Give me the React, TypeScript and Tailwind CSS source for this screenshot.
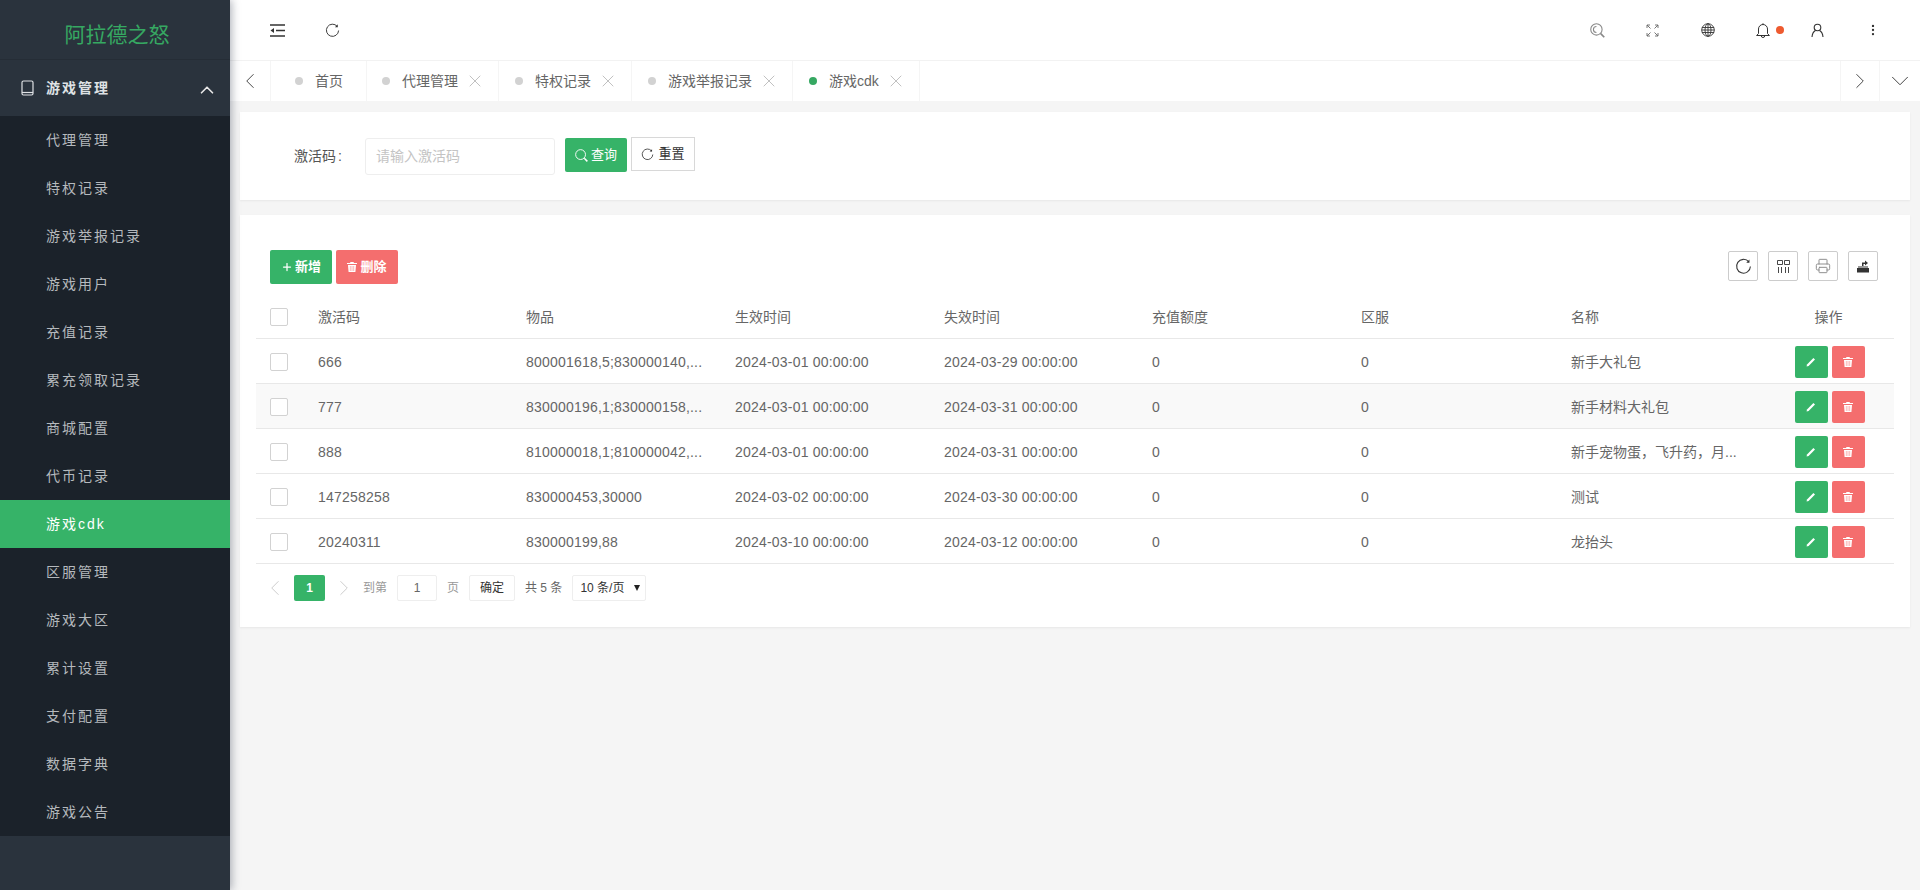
import { ChevronDown, ChevronLeft, ChevronRight, ChevronUp, MoreVertical, Plus, Printer, X } from "lucide-react";

const menus = ["代理管理", "特权记录", "游戏举报记录", "游戏用户", "充值记录", "累充领取记录", "商城配置", "代币记录", "游戏cdk", "区服管理", "游戏大区", "累计设置", "支付配置", "数据字典", "游戏公告"];

const tabs = [
  { name: "首页", cls: "w-[96px] pl-6" },
  { name: "代理管理", cls: "w-[132px] pl-[15px]" },
  { name: "特权记录", cls: "w-[133px] pl-4" },
  { name: "游戏举报记录", cls: "w-[161px] pl-4" },
  { name: "游戏cdk", cls: "w-[127px] pl-4", active: true },
];

const rows = [
  ["666", "800001618,5;830000140,...", "2024-03-01 00:00:00", "2024-03-29 00:00:00", "0", "0", "新手大礼包"],
  ["777", "830000196,1;830000158,...", "2024-03-01 00:00:00", "2024-03-31 00:00:00", "0", "0", "新手材料大礼包"],
  ["888", "810000018,1;810000042,...", "2024-03-01 00:00:00", "2024-03-31 00:00:00", "0", "0", "新手宠物蛋，飞升药，月..."],
  ["147258258", "830000453,30000", "2024-03-02 00:00:00", "2024-03-30 00:00:00", "0", "0", "测试"],
  ["20240311", "830000199,88", "2024-03-10 00:00:00", "2024-03-12 00:00:00", "0", "0", "龙抬头"],
];

const head = ["激活码", "物品", "生效时间", "失效时间", "充值额度", "区服", "名称"];

const gridCols = "grid grid-cols-[62px_208px_209px_209px_208px_209px_210px_192px_1fr] items-center pt-[2px]";

const Reload = ({ size = 16 }: { size?: number }) => (
  <svg width={size} height={size} viewBox="0 0 16 16" fill="none" stroke="currentColor" strokeWidth="1">
    <path d="M13 3.600A6.500 6.500 0 1 0 14.500 8" />
    <path d="M13.600 1.400v3h-3" fill="currentColor" stroke="none" />
  </svg>
);

const Magnifier = ({ size = 14, inner = false }: { size?: number; inner?: boolean }) => (
  <svg width={size} height={size} viewBox="0 0 14 14" fill="none" stroke="currentColor" strokeWidth="1">
    <circle cx="6" cy="6" r="5.300" />
    {inner && <path d="M6 3.200a2.800 2.800 0 0 0 0 5.600" />}
    <path d="M10 10l3.300 3.300" strokeWidth="1.600" />
  </svg>
);

const Trash = ({ size = 10 }: { size?: number }) => (
  <svg width={size} height={size} viewBox="0 0 10 10" fill="currentColor">
    <path d="M3.500 0h3l.5 1h3v1H0V1h3zM1 3h8l-.6 7H1.600z" />
    <path d="M3.300 4v5M5 4v5M6.700 4v5" stroke="#f46e6e" strokeWidth=".5" />
  </svg>
);

const Pen = () => (
  <svg width="10" height="10" viewBox="0 0 10 10" fill="currentColor">
    <path d="M7.400 1 9 2.600 2.600 9 .6 9.400 1 7.400z" />
  </svg>
);

const Checkbox = () => <span className="block h-[18px] w-[18px] rounded-[2px] border border-[#d2d2d2] bg-white" />;

const App = () => {
  return (
    <div className="flex h-screen w-full overflow-hidden bg-[#f5f5f5] font-['Liberation_Sans','Noto_Sans_CJK_SC',sans-serif] text-sm text-[#666]">
      {/* sidebar */}
      <div className="relative z-10 flex w-[230px] shrink-0 flex-col bg-[#2a333d] shadow-[2px_0_8px_rgba(40,50,70,0.35)]">
        <div className="flex h-[60px] items-center justify-center border-b border-[#252d36] pl-1 pt-[10px] text-[21px] text-[#36a862]">阿拉德之怒</div>
        <div className="flex h-[56px] items-center pl-[21px] pr-3 font-bold tracking-[2px] text-[#dfe2e5]">
          <svg width="13" height="16" viewBox="0 0 13 16" fill="none" stroke="currentColor" strokeWidth="1.200">
            <rect x="1" y="1" width="11" height="14" rx="1.500" />
            <path d="M1 12.500h11" />
          </svg>
          <span className="ml-3 flex-1">游戏管理</span>
          <ChevronUp size={22} strokeWidth={1.800} className="mt-1 text-[#e8e8e8]" />
        </div>
        <div className="bg-[#1b222a]">
          {menus.map((m) => (
            <div key={m} className={`flex h-12 items-center pl-[46px] tracking-[2px] ${m === "游戏cdk" ? "bg-[#36b368] text-white" : "text-[#b5b9bd]"}`}>
              {m}
            </div>
          ))}
        </div>
      </div>

      {/* main */}
      <div className="flex min-w-0 flex-1 flex-col">
        <div className="flex h-[60px] shrink-0 items-center justify-between bg-white px-5 text-[#333]">
          <div className="flex items-center">
            <span className="flex w-[55px] justify-center">
              <svg width="15" height="13" viewBox="0 0 15 13" fill="none" stroke="currentColor" strokeWidth="1.500">
                <path d="M0 1h15M6 6.500h9M0 12h15" />
                <path d="M4 4v5L.5 6.500z" fill="currentColor" stroke="none" />
              </svg>
            </span>
            <span className="flex w-[55px] justify-center">
              <Reload size={15} />
            </span>
          </div>
          <div className="flex items-center">
            <span className="flex w-[55px] justify-center text-[#888]">
              <Magnifier size={15} inner />
            </span>
            <span className="flex w-[55px] justify-center text-[#666]">
              <svg width="13" height="13" viewBox="0 0 13 13" fill="none" stroke="currentColor" strokeWidth=".9">
                <path d="M1 1l3.500 3.500M1 1v3M1 1h3M12 1 8.500 4.500M12 1v3M12 1H9M1 12l3.500-3.500M1 12V9M1 12h3M12 12 8.500 8.500M12 12V9M12 12H9" />
              </svg>
            </span>
            <span className="flex w-[55px] justify-center text-[#333]">
              <svg width="14" height="14" viewBox="0 0 14 14" fill="none" stroke="currentColor" strokeWidth=".9">
                <circle cx="7" cy="7" r="6.300" />
                <ellipse cx="7" cy="7" rx="3" ry="6.300" />
                <path d="M7 .7v12.600M1 4.500h12M.7 7h12.600M1 9.500h12" />
              </svg>
            </span>
            <span className="relative flex w-[55px] justify-center text-[#333]">
              <svg width="14" height="15" viewBox="0 0 14 15" fill="none" stroke="currentColor" strokeWidth="1">
                <path d="M7 1.500a4.500 4.500 0 0 0-4.500 4.500v4.500L.6 12.500h12.800l-1.900-2V6A4.500 4.500 0 0 0 7 1.500zM7 .3v1.200M5.300 12.800a1.700 1.700 0 0 0 3.400 0" />
              </svg>
              <span className="absolute left-[41px] top-[3px] h-2 w-2 rounded-full bg-[#ee5a2f]" />
            </span>
            <span className="flex w-[55px] justify-center text-[#333]">
              <svg width="13" height="15" viewBox="0 0 13 15" fill="none" stroke="currentColor" strokeWidth="1.100">
                <circle cx="6.500" cy="4.500" r="3.300" />
                <path d="M4.500 7.500C2.500 8.500 1.300 10.500 1 14M8.500 7.500c2 1 3.200 3 3.500 6.500" />
              </svg>
            </span>
            <span className="flex w-[55px] justify-center text-[#333]">
              <MoreVertical size={14} />
            </span>
          </div>
        </div>

        {/* tabs */}
        <div className="flex h-[41px] shrink-0 items-stretch border-t border-[#f2f2f2] bg-white">
          <div className="flex w-[41px] items-center justify-center border-r border-[#f5f5f5] text-[#444]">
            <ChevronLeft size={26} strokeWidth={0.900} />
          </div>
          {tabs.map((t) => (
            <div key={t.name} className={`flex items-center border-r border-[#f5f5f5] ${t.cls}`}>
              <span className={`h-2 w-2 shrink-0 rounded-full ${t.active ? "bg-[#36a862]" : "bg-[#d2d2d2]"}`} />
              <span className="ml-3">{t.name}</span>
              {t.name !== "首页" && <X size={20} strokeWidth={1.100} className="ml-[7px] text-[#bbb]" />}
            </div>
          ))}
          <div className="flex-1" />
          <div className="flex w-10 items-center justify-center border-x border-[#f5f5f5] text-[#444]">
            <ChevronRight size={26} strokeWidth={0.900} />
          </div>
          <div className="flex w-10 items-center justify-center text-[#444]">
            <ChevronDown size={30} strokeWidth={0.800} />
          </div>
        </div>

        {/* content */}
        <div className="flex flex-1 flex-col gap-[15px] px-2.5 pt-[11px]">
          <div className="flex h-[88px] items-center bg-white pl-[54px] shadow-[0_1px_2px_rgba(0,0,0,0.06)]">
            <span className="w-[71px] text-[#555]">
              激活码<span className="ml-[2px]">:</span>
            </span>
            <input placeholder="请输入激活码" className="h-[37px] w-[190px] rounded-[3px] border border-[#eee] pl-[10px] text-sm outline-none placeholder:text-[#c4c4c4]" />
            <button className="-mt-[2px] ml-2.5 flex h-[34px] w-[62px] items-center justify-center gap-[3px] rounded-[2px] bg-[#36b368] text-[13px] text-white">
              <Magnifier size={13} />
              查询
            </button>
            <button className="-mt-1 ml-1 flex h-[34px] w-[64px] items-center justify-center gap-1 border border-[#d8d8d8] text-[13px] text-[#333]">
              <Reload size={13} />
              重置
            </button>
          </div>

          <div className="h-[412px] bg-white px-4 pt-[35px] shadow-[0_1px_2px_rgba(0,0,0,0.06)]">
            <div className="flex items-start justify-between pl-[14px] pr-4">
              <div className="flex gap-1">
                <button className="flex h-[34px] w-[62px] items-center justify-center gap-0.5 rounded-[2px] bg-[#36b368] text-[13px] font-bold text-white">
                  <Plus size={12} strokeWidth={2.500} />
                  新增
                </button>
                <button className="flex h-[34px] w-[62px] items-center justify-center gap-[3px] rounded-[2px] bg-[#f46e6e] text-[13px] font-bold text-white">
                  <Trash />
                  删除
                </button>
              </div>
              <div className="mt-px flex gap-2.5 text-[#333]">
                <button className="flex h-[30px] w-[30px] items-center justify-center rounded-[2px] border border-[#ccc]">
                  <Reload size={17} />
                </button>
                <button className="flex h-[30px] w-[30px] items-center justify-center rounded-[2px] border border-[#ccc]">
                  <svg width="13" height="13" viewBox="0 0 13 13" fill="none" stroke="currentColor" strokeWidth=".9">
                    <path d="M.5.500h5v4h-5zM7.500.500h5v4h-5zM1.500 7v6M4.500 7v6M8.500 7v6M11.500 7v6" />
                  </svg>
                </button>
                <button className="flex h-[30px] w-[30px] items-center justify-center rounded-[2px] border border-[#ccc] text-[#888]">
                  <Printer size={16} strokeWidth={1.400} />
                </button>
                <button className="flex h-[30px] w-[30px] items-center justify-center rounded-[2px] border border-[#ccc]">
                  <svg width="14" height="14" viewBox="0 0 14 14" fill="currentColor">
                    <path d="M1 9h12v4.500H1zM2 7.500h10V8.500H2zM6 7V3.500h3V1.500L12 4 9 6.500V5H7.500v2z" />
                  </svg>
                </button>
              </div>
            </div>

            <div className={`mt-2.5 h-[45px] border-b border-[#e8e8e8] ${gridCols}`}>
              <span className="pl-[14px]"><Checkbox /></span>
              {head.map((h) => (
                <span key={h}>{h}</span>
              ))}
              <span className="text-center">操作</span>
            </div>
            {rows.map((r, i) => (
              <div key={r[0]} className={`h-[45px] border-b border-[#e8e8e8] ${gridCols} ${i === 1 ? "bg-[#f9f9f9]" : ""}`}>
                <span className="pl-[14px]"><Checkbox /></span>
                {r.map((c, j) => (
                  <span key={j} className={j < 6 ? "tracking-[0.2px]" : ""}>{c}</span>
                ))}
                <span className="flex justify-center gap-1 pl-[2px]">
                  <button className="flex h-8 w-[33px] items-center justify-center rounded-[2px] bg-[#36b368] text-white"><Pen /></button>
                  <button className="flex h-8 w-[33px] items-center justify-center rounded-[2px] bg-[#f46e6e] text-white"><Trash /></button>
                </span>
              </div>
            ))}

            <div className="mt-[11px] flex h-[26px] items-center pl-[14px] text-xs text-[#999]">
              <span className="flex w-[24px] text-[#ccc]"><ChevronLeft size={26} strokeWidth={0.900} className="-ml-2 shrink-0" /></span>
              <span className="flex h-[26px] w-[31px] items-center justify-center rounded-[2px] bg-[#36b368] font-bold text-white">1</span>
              <span className="flex w-[38px] justify-center text-[#ccc]"><ChevronRight size={26} strokeWidth={0.900} /></span>
              <span>到第</span>
              <span className="ml-2.5 flex h-[26px] w-10 items-center justify-center rounded-[2px] border border-[#eee] text-[#666]">1</span>
              <span className="ml-2.5">页</span>
              <span className="ml-2.5 flex h-[26px] w-[46px] items-center justify-center rounded-[2px] border border-[#eee] text-[#333]">确定</span>
              <span className="ml-2.5 text-[#666]">共 5 条</span>
              <span className="ml-2.5 flex h-[26px] w-[74px] items-center justify-between rounded-[2px] border border-[#eee] pl-[7px] pr-[5px] text-[#333]">
                10 条/页
                <span className="h-0 w-0 border-x-[3.500px] border-t-[6px] border-x-transparent border-t-[#222]" />
              </span>
            </div>
          </div>
        </div>
      </div>
    </div>
  );
};

export default App;
